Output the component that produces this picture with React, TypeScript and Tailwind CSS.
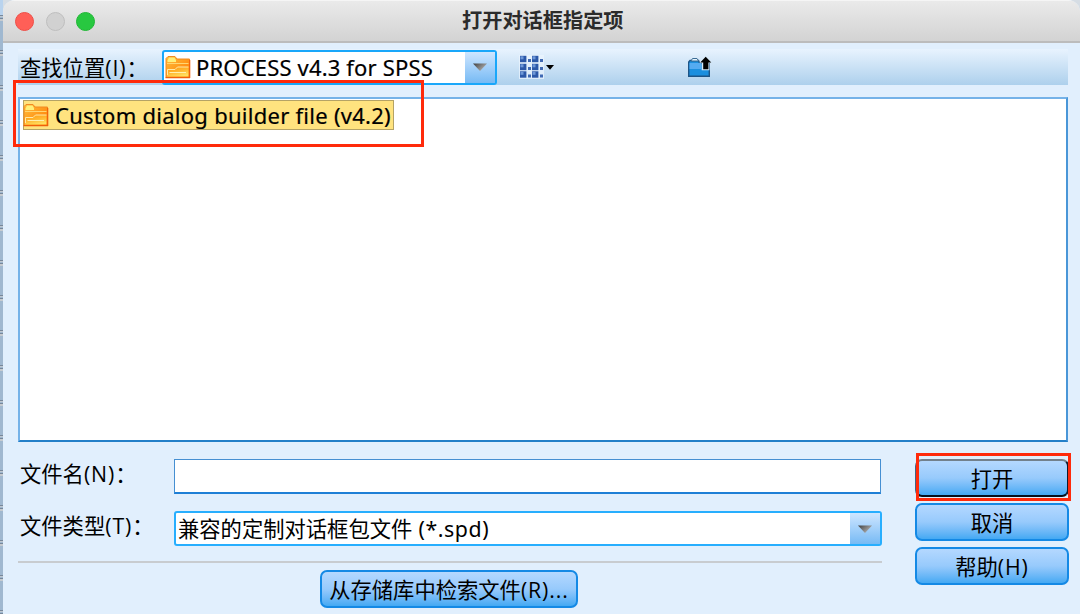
import type { ReactNode } from 'react';

const FONT = "font-['Open_Sans','Noto_Sans_CJK_SC',sans-serif]";

function Folder() {
  return (
    <svg width="26" height="24" viewBox="0 0 26 24" className="block shrink-0">
      <defs>
        <linearGradient id="folderBack" x1="0" y1="0" x2="1" y2="1">
          <stop offset="0" stopColor="#ffbd3c" />
          <stop offset="1" stopColor="#ff7a00" />
        </linearGradient>
        <linearGradient id="folderFront" x1="0.1" y1="0" x2="0.6" y2="1">
          <stop offset="0" stopColor="#ff9a10" />
          <stop offset="0.5" stopColor="#ffb52e" />
          <stop offset="1" stopColor="#ffe060" />
        </linearGradient>
      </defs>
      <path d="M1 22.5V3.5L3 1.5H10L12 4H24.5V22.5Z" fill="url(#folderBack)" stroke="#f28a22" />
      <path d="M2.5 5.5L4 2.5H9.5L11 5V7H2.5Z" fill="#fff07a" />
      <path d="M2 8.5H23.5" stroke="#ffd672" />
      <path d="M2 21.5V14.5H10L12.5 12H23.5V21.5Z" fill="url(#folderFront)" />
      <path d="M2.5 20V14.5H10L12.5 12H23.5" fill="none" stroke="#ffe9a6" strokeWidth="1" />
      <path d="M4.5 17.5H21" stroke="#fff0b0" strokeWidth="1" />
      <path d="M0.5 22.7H25M24.7 5V23" stroke="#f0600c" strokeWidth="1.2" />
    </svg>
  );
}

function Arrow({ id }: { id: string }) {
  return (
    <svg width="14" height="8" viewBox="0 0 14 8" className="block">
      <defs>
        <linearGradient id={id} x1="0" y1="0" x2="1" y2="0.6">
          <stop offset="0" stopColor="#3e3e3e" />
          <stop offset="1" stopColor="#b5b5b5" />
        </linearGradient>
      </defs>
      <path d="M0 0.5H14L7 8Z" fill={`url(#${id})`} />
    </svg>
  );
}

function ViewIcon() {
  const rows = [0, 8, 15.5];
  const cols = [0, 12];
  return (
    <svg width="35" height="24" viewBox="0 0 35 24" className="block">
      <rect x="0" y="0" width="25" height="24" fill="#edf5fd" opacity=".7" />
      {rows.map((y) =>
        cols.map((x) => (
          <g key={`${x}-${y}`}>
            <rect x={x + 1} y={y + 0.8} width="6.4" height="6.4" fill="#2c58a8" />
            <rect x={x + 1.5} y={y + 1.3} width="3" height="3" fill="#6e98d8" />
            <rect x={x + 9} y={y + 4} width="3" height="3" fill="#3f69b3" />
          </g>
        )),
      )}
      <path d="M27 10H35L31 14.7Z" fill="#000" />
    </svg>
  );
}

function UpFolder() {
  return (
    <svg width="25" height="22" viewBox="0 0 25 22" className="block">
      <path d="M1.7 20.3V6L3 4.5H11.5L12.5 7H22.3V20.3Z" fill="#1b8fdf" stroke="#1d5587" strokeWidth="1.4" />
      <path d="M2.5 7H14V13H2.5Z" fill="#55abf1" />
      <path d="M4 5L5.5 2.5H10L11.5 5Z" fill="#e4f2fc" stroke="#3b6c94" />
      <path d="M18.7 0L25 7H22.4V14.3H14.7V7H12.4Z" fill="#d6e9f7" />
      <path d="M18.7 0.8L24.3 6.5H21.4V13.3H16.2V6.5H13.2Z" fill="#000" />
    </svg>
  );
}

function Button({ children, active = false }: { children: ReactNode; active?: boolean }) {
  return (
    <button
      className={`flex h-[38px] w-full items-center justify-center rounded-[7px] border-2 bg-linear-to-b from-[#b4d8ff] via-[#97cafc] to-[#43a9f3] pt-[2px] text-[21.3px] leading-none whitespace-nowrap ${
        active ? 'border-t-[#72808c] border-r-[#0d1c30] border-b-[#05101c] border-l-[#426383]' : 'border-[#1489e5]'
      }`}
    >
      {children}
    </button>
  );
}

function Key({ children }: { children: string }) {
  return <span className="tracking-[0.9px]">{children}</span>;
}

export default function App() {
  return (
    <div className={`relative flex h-[614px] w-[1080px] overflow-hidden bg-[#d6dde4] text-black ${FONT}`}>
      <div className="w-[3px] shrink-0 bg-[#a0b8d0]">
        <div className="h-[15px] bg-[#b9d3ee]" />
        {Array.from({ length: 18 }, (_, i) => (
          <div key={i} className="flex h-[35px] flex-col">
            <div className="h-px bg-[#77889b]" />
            <div className="h-px bg-[#c0c8d0]" />
            <div className="mt-px h-px bg-[#77889b]" />
            <div className="h-[2px] bg-[#c6cbd0]" />
          </div>
        ))}
      </div>
      <main className="flex flex-1 flex-col overflow-hidden rounded-t-[12px] bg-[#e1effd]">
        <header className="flex h-[43px] shrink-0 items-center border-t border-b-2 border-t-[#f5f5f5] border-b-[#bcbcbc] bg-linear-to-b from-[#eaeaea] to-[#d3d3d3] pl-[12px]">
          <div className="flex gap-[11.5px]">
            <i className="size-[19px] rounded-full border border-[#ed4e47] bg-[#ff5f57]" />
            <i className="size-[19px] rounded-full border border-[#bebebe] bg-[#d1d1d1]" />
            <i className="size-[19px] rounded-full border border-[#20b735] bg-[#28c840]" />
          </div>
          <h1 className="ml-[367px] pb-[2px] text-[20.2px] leading-none font-bold whitespace-nowrap text-[#2b2b2b]">打开对话框指定项</h1>
        </header>
        <div className="mt-[6px] mr-[12px] ml-[15px] flex h-[36px] shrink-0 items-center bg-linear-to-b from-[#e8f3fe] to-[#add0ec]">
          <span className="w-[144px] pt-px pl-[2px] text-[21.3px] leading-none whitespace-nowrap">查找位置<Key>(I)</Key>：</span>
          <div className="flex h-[35px] w-[335px] shrink-0 rounded-[3px] border-2 border-[#19a7fa] bg-white">
            <div className="flex flex-1 items-center pl-px">
              <Folder />
              <span className="ml-[5px] font-['Noto_Sans',sans-serif] text-[22px] leading-none tracking-[0.17px] whitespace-nowrap [-webkit-text-stroke:0.2px]">PROCESS v4.3 for SPSS</span>
            </div>
            <div className="flex w-[30px] items-center justify-center bg-linear-to-b from-[#cee6ff] to-[#76baf4]">
              <Arrow id="arrowLocation" />
            </div>
          </div>
          <div className="ml-[22px]"><ViewIcon /></div>
          <div className="ml-[133px]"><UpFolder /></div>
        </div>
        <section className="mt-[12px] mr-[12px] ml-[15px] flex h-[345px] shrink-0 items-start border-2 border-t-[#75b2e8] border-r-[#4996d8] border-b-[#237fc8] border-l-[#75b2e8] bg-white pt-px pl-[3px]">
          <div className="flex h-[30px] w-[371px] items-center border border-[#b5a365] bg-[#ffe37f]">
            <div className="-ml-px"><Folder /></div>
            <span className="ml-[6px] font-['Noto_Sans',sans-serif] text-[22px] leading-none tracking-[0.27px] whitespace-nowrap [-webkit-text-stroke:0.2px]">Custom dialog builder file (v4.2)</span>
          </div>
        </section>
        <div className="mt-[17px] mr-[11px] ml-[15px] flex">
          <div className="w-[864px]">
            <div className="flex h-[35px] items-center">
              <label className="w-[156px] shrink-0 pb-[5px] pl-[2px] text-[21.3px] leading-none whitespace-nowrap">文件名<Key>(N)</Key>：</label>
              <div className="h-[35px] w-[707px] border border-b-2 border-[#458fd2] border-b-[#1e7fd6] bg-white" />
            </div>
            <div className="mt-[17px] flex h-[35px] items-center">
              <label className="w-[156px] shrink-0 pb-[5px] pl-[2px] text-[21.3px] leading-none whitespace-nowrap">文件类型<Key>(T)</Key>：</label>
              <div className="flex h-[35px] w-[708px] rounded-[3px] border-2 border-[#27aefe] bg-white">
                <span className="flex flex-1 items-center pl-[2px] text-[21.3px] leading-none whitespace-pre">
                  兼容的定制对话框包文件<span className="font-['Noto_Sans',sans-serif] tracking-[0.6px]"> (*.spd)</span>
                </span>
                <div className="flex w-[30px] items-center justify-center bg-linear-to-b from-[#cee6ff] to-[#76baf4]">
                  <Arrow id="arrowType" />
                </div>
              </div>
            </div>
            <div className="mt-[15px] h-[2px] bg-[#c8ccd0]" />
            <div className="mt-[7px] ml-[302px] w-[258px]"><Button>从存储库中检索文件<Key>(R)...</Key></Button></div>
          </div>
          <div className="ml-[33px] flex w-[154px] flex-col gap-[6px]">
            <Button active>打开</Button>
            <Button>取消</Button>
            <Button>帮助<Key>(H)</Key></Button>
          </div>
        </div>
      </main>
      <div className="absolute top-[80px] left-[13px] h-[67px] w-[411px] border-[3px] border-[#ff2a0b]" />
      <div className="absolute top-[453px] left-[916px] h-[48px] w-[155px] border-[3px] border-[#ff2a0b]" />
    </div>
  );
}
